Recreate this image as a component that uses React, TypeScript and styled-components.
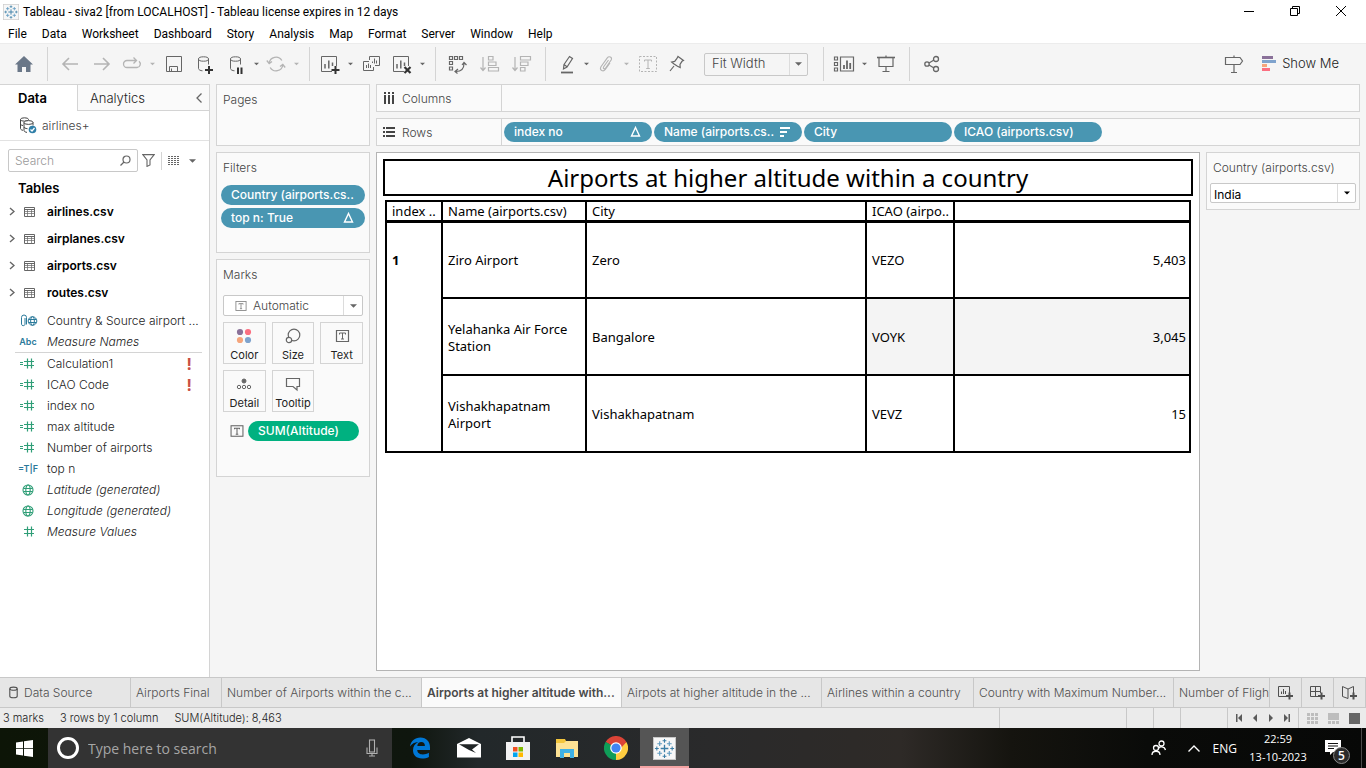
import React from "react";
import styled, { createGlobalStyle, css } from "styled-components";

const UI = `Inter, "Liberation Sans", sans-serif`;
const MENU = `Roboto, "Open Sans", sans-serif`;
const SYSTEM = `"Open Sans", "Noto Sans", sans-serif`;
const VIZ = `"Noto Sans", "Open Sans", sans-serif`;

const C = {
  line: "#d4d4d4",
  panel: "#fafafa",
  chrome: "#f5f5f5",
  ink: "#222222",
  soft: "#444444",
  icon: "#666666",
  off: "#b4b4b4",
  blue: "#4996b2",
  green: "#00b180",
  fieldGreen: "#2f9e77",
  fieldBlue: "#2b7a9b",
};

const Global = createGlobalStyle`
  *, *::before, *::after { box-sizing: border-box; }
  body { margin: 0; background: ${C.chrome}; font-family: ${UI}; font-size: 12px; font-weight: 300; color: ${C.ink}; }
  button, input, select { font: inherit; color: inherit; }
  button { background: none; border: 0; padding: 0; cursor: default; }
  h1, h2, h3, ul { margin: 0; padding: 0; font: inherit; }
  ul { list-style: none; }
  svg { display: block; flex: none; }
`;

const Window = styled.div`
  display: flex;
  flex-direction: column;
  min-height: 100vh;
`;

/* ---------- window chrome ---------- */

const TitleBar = styled.header`
  display: flex;
  align-items: center;
  height: 24px;
  padding: 0 2px 1px 3px;
  background: #fff;
  color: #000;
  font-family: ${MENU};
  font-size: 12px;
  font-weight: 400;
`;

const WindowTitle = styled.h1`
  flex: 1;
  margin-left: 4px;
`;

const WindowButton = styled.button`
  display: flex;
  align-items: center;
  justify-content: center;
  width: 46px;
  height: 20px;
  padding-bottom: 2px;
`;

const MenuBar = styled.nav`
  display: flex;
  align-items: center;
  height: 19px;
  padding-left: 8px;
  gap: 15px;
  background: #fff;
  color: #000;
  font-family: ${MENU};
  font-size: 12px;
  font-weight: 400;
`;

const ToolBar = styled.div`
  display: flex;
  align-items: center;
  height: 41px;
  padding: 0 27px 0 8px;
  border-top: 1px solid #ececec;
  background: ${C.chrome};
`;

const Tool = styled.button<{ $w?: number; $tone?: string }>`
  display: flex;
  flex: none;
  align-items: center;
  justify-content: center;
  width: ${(p) => p.$w ?? 32}px;
  height: 32px;
  color: ${(p) => p.$tone ?? C.icon};
`;

const Divider = styled.span`
  flex: none;
  align-self: stretch;
  width: 1px;
  margin: 3px 6px 3px 7px;
  background: ${C.line};
`;

const ShowMe = styled.button`
  display: flex;
  align-items: center;
  gap: 6px;
  margin-left: 12px;
  padding-bottom: 2px;
  font-size: 13px;
`;

const Spacer = styled.span`
  flex: 1;
`;

/* ---------- selects ---------- */

const Picker = styled.label<{ $h: number; $caret: number; $bg?: string }>`
  display: grid;
  align-items: center;
  height: ${(p) => p.$h}px;
  border: 1px solid #c8c8c8;
  border-radius: 2px;
  background: ${(p) => p.$bg ?? "#fff"};
  & > * { grid-area: 1 / 1; }
  & > svg { color: #8a8a8a; }
  select {
    width: 100%;
    height: 100%;
    border: 0;
    background: none;
    appearance: none;
    outline: 0;
  }
  & > span {
    display: flex;
    align-items: center;
    justify-content: center;
    justify-self: end;
    width: ${(p) => p.$caret}px;
    height: 100%;
    border-left: 1px solid #dcdcdc;
    color: ${C.icon};
    pointer-events: none;
  }
`;

const FitPicker = styled(Picker)`
  width: 104px;
  margin: 0 8px 0 12px;
  color: ${C.soft};
  font-size: 13px;
  select { padding: 0 0 2px 7px; }
`;

const MarkPicker = styled(Picker)`
  color: ${C.soft};
  select { padding: 0 0 0 29px; }
  & > svg { margin-left: 11px; }
`;

const CountryPicker = styled(Picker)`
  margin: 0 3px;
  color: #000;
  font-weight: 400;
  select { padding: 2px 0 0 3px; }
`;

/* ---------- data pane ---------- */

const Main = styled.main`
  display: flex;
  flex: 1;
`;

const DataPane = styled.aside`
  flex: none;
  width: 210px;
  border-top: 1px solid ${C.line};
  border-right: 1px solid ${C.line};
  background: #fff;
`;

const PaneTabs = styled.div`
  display: flex;
  height: 26px;
  font-size: 13px;
`;

const DataTab = styled.button`
  width: 77px;
  padding-right: 12px;
  font-weight: 600;
  color: #000;
`;

const AnalyticsTab = styled.button`
  flex: 1;
  padding-left: 12px;
  text-align: left;
  border-left: 1px solid ${C.line};
  border-bottom: 1px solid ${C.line};
  background: ${C.panel};
`;

const Collapse = styled.button`
  padding-right: 7px;
  border-bottom: 1px solid ${C.line};
  background: ${C.panel};
  color: ${C.icon};
`;

const Source = styled.div`
  display: flex;
  align-items: center;
  gap: 5px;
  height: 30px;
  padding-left: 20px;
  border-bottom: 1px solid #e2e2e2;
  color: ${C.soft};
`;

const SearchRow = styled.div`
  display: flex;
  align-items: center;
  height: 23px;
  margin: 8px 13px 0 8px;
  color: ${C.icon};
`;

const SearchBox = styled.label`
  display: flex;
  align-items: center;
  width: 130px;
  height: 23px;
  margin-right: 4px;
  padding: 0 6px;
  border: 1px solid #c8c8c8;
  border-radius: 2px;
  input {
    flex: 1;
    min-width: 0;
    padding: 0;
    border: 0;
    outline: 0;
    background: none;
  }
  input::placeholder { color: #999; opacity: 1; }
`;

const SearchSplit = styled.span`
  width: 1px;
  height: 18px;
  margin: 0 6px;
  background: ${C.line};
`;

const TablesHeading = styled.h2`
  margin: 6px 0 0 18px;
  line-height: 21px;
  font-size: 13px;
  font-weight: 600;
  color: #000;
`;

const TableRow = styled.li`
  display: flex;
  align-items: center;
  height: 27px;
  padding: 0 0 2px 9px;
  font-weight: 600;
  color: #000;
  svg { color: ${C.icon}; }
  svg:nth-of-type(2) { margin: 0 12px 0 9px; }
`;

const FieldList = styled.ul<{ $ruled?: boolean }>`
  margin: ${(p) => (p.$ruled ? "0 7px 0 15px" : "3px 7px 0 15px")};
  ${(p) => p.$ruled && css`
    border-top: 1px solid ${C.line};
  `}
`;

const Field = styled.li<{ $italic?: boolean; $tone: string }>`
  display: flex;
  align-items: center;
  height: 21px;
  white-space: nowrap;
  font-style: ${(p) => (p.$italic ? "italic" : "normal")};
  & > span:first-child {
    display: flex;
    justify-content: center;
    width: 26px;
    margin-right: 6px;
    color: ${(p) => p.$tone};
    font-size: 9px;
    font-weight: 600;
    font-style: normal;
  }
`;

const Warning = styled.strong`
  margin-left: auto;
  padding-right: 10px;
  color: #c94f43;
  font-size: 16px;
  font-weight: 700;
`;

/* ---------- shelves and cards ---------- */

const Cards = styled.div`
  display: flex;
  flex: none;
  flex-direction: column;
  gap: 6px;
  width: 154px;
  margin-left: 6px;
`;

const Card = styled.section<{ $h: number }>`
  min-height: ${(p) => p.$h}px;
  border: 1px solid ${C.line};
  background: ${C.panel};
  color: ${C.soft};
`;

const CardTitle = styled.h3`
  padding: 0 6px;
  line-height: 30px;
`;

const Pill = styled.button<{ $w: number; $green?: boolean }>`
  display: flex;
  flex: none;
  align-items: center;
  justify-content: space-between;
  width: ${(p) => p.$w}px;
  height: 20px;
  padding: 0 11px 1px 10px;
  border-radius: 10px;
  background: ${(p) => (p.$green ? C.green : C.blue)};
  color: #fff;
  font-weight: 500;
  white-space: nowrap;
`;

const FilterPills = styled.div`
  display: flex;
  flex-direction: column;
  gap: 3px;
  padding: 2px 4px;
`;

const MarksBody = styled.div`
  display: grid;
  gap: 6px;
  padding: 5px 6px;
`;

const MarkGrid = styled.div`
  display: grid;
  grid-template-columns: repeat(3, 1fr);
  gap: 6px;
`;

const MarkButton = styled.button`
  display: flex;
  flex-direction: column;
  align-items: center;
  justify-content: space-between;
  height: 42px;
  padding-top: 4px;
  border: 1px solid ${C.line};
  line-height: 15px;
  font-size: 11px;
  font-weight: 400;
  color: ${C.ink};
  svg { color: ${C.icon}; }
`;

const EncodedMark = styled.div`
  display: flex;
  align-items: center;
  gap: 4px;
  padding: 3px 0 0 7px;
  color: ${C.icon};
`;

const Work = styled.div`
  display: flex;
  flex: 1;
  flex-direction: column;
  gap: 6px;
  min-width: 0;
  margin: 0 6px;
  padding-bottom: 6px;
`;

const Shelf = styled.div`
  display: flex;
  align-items: center;
  height: 28px;
  border: 1px solid ${C.line};
  background: ${C.panel};
`;

const ShelfLabel = styled.div`
  display: flex;
  flex: none;
  align-items: center;
  gap: 7px;
  width: 125px;
  height: 100%;
  margin-right: 2px;
  padding-left: 6px;
  border-right: 1px solid ${C.line};
  color: ${C.soft};
`;

const ShelfPills = styled.div`
  display: flex;
  gap: 2px;
`;

const ViewRow = styled.div`
  display: flex;
  flex: 1;
  gap: 6px;
`;

const Viz = styled.section`
  flex: 1;
  min-width: 0;
  padding: 6px;
  border: 1px solid #b4b4b4;
  background: #fff;
  color: #000;
  font-family: ${VIZ};
  font-size: 13px;
  font-weight: 400;
`;

const VizTitle = styled.h2`
  height: 37px;
  border: 2px solid #000;
  line-height: 34px;
  font-size: 24px;
  text-align: center;
`;

const VizTable = styled.table`
  width: calc(100% - 4px);
  margin: 4px 2px 0;
  table-layout: fixed;
  border-collapse: collapse;
  line-height: 17px;
`;

const Head = styled.th`
  height: 20px;
  padding: 1px 4px 0 5px;
  border: 2px solid #000;
  border-bottom-width: 3px;
  font-weight: 400;
  line-height: 16px;
  text-align: left;
  white-space: nowrap;
`;

const Cell = styled.td<{ $num?: boolean; $shade?: boolean }>`
  height: 77px;
  padding: 2px 3px 0 5px;
  border: 2px solid #000;
  background: ${(p) => (p.$shade ? "#f4f4f4" : "#fff")};
  text-align: ${(p) => (p.$num ? "right" : "left")};
`;

const IndexCell = styled.th`
  padding: 29px 5px 0;
  border: 2px solid #000;
  text-align: left;
  vertical-align: top;
`;

const FilterCard = styled(Card)`
  flex: none;
  align-self: flex-start;
  width: 154px;
  padding-bottom: 4px;
`;

/* ---------- sheet tabs and status ---------- */

const SheetTabs = styled.nav`
  display: flex;
  height: 31px;
  border-top: 1px solid #c8c8c8;
  border-bottom: 1px solid #c8c8c8;
  background: #e6e6e6;
  color: #505050;
`;

const SheetTab = styled.button<{ $w: number; $active?: boolean; $pad?: number }>`
  display: flex;
  flex: 0 0 ${(p) => p.$w}px;
  align-items: center;
  gap: 5px;
  padding-left: ${(p) => p.$pad ?? 5}px;
  overflow: hidden;
  border-right: 1px solid #c8c8c8;
  white-space: nowrap;
  ${(p) => p.$active && css`
    background: ${C.panel};
    color: #4a4a4a;
    font-weight: 600;
  `}
`;

const LastSheetTab = styled(SheetTab)`
  flex: 1 1 0;
`;

const NewSheet = styled.button`
  display: flex;
  flex: none;
  align-items: center;
  justify-content: center;
  width: 32px;
  border-right: 1px solid #c8c8c8;
`;

const StatusBar = styled.footer`
  display: flex;
  align-items: center;
  height: 20px;
  padding-left: 3px;
  background: #ebebeb;
  font-size: 11px;
`;

const StatusText = styled.span`
  margin-right: 16px;
`;

const StatusCell = styled.div<{ $w: number; $gap?: number; $pad?: number }>`
  display: flex;
  flex: none;
  align-items: center;
  gap: ${(p) => p.$gap ?? 0}px;
  width: ${(p) => p.$w}px;
  height: 100%;
  padding-left: ${(p) => p.$pad ?? 0}px;
  border-left: 1px solid #c8c8c8;
  color: #5a5a5a;
`;

/* ---------- operating system task bar ---------- */

const TaskBar = styled.footer`
  display: flex;
  align-items: center;
  height: 40px;
  background: linear-gradient(90deg, #0d1507 0, #0f160e 30%, #22282a 35%, #2a2a2b 52%, #2e2a27 66%, #15140f 74%, #0a0b09 84%, #070807 100%);
  color: #fff;
  font-family: ${SYSTEM};
  font-weight: 400;
`;

const Start = styled.button`
  display: flex;
  align-items: center;
  justify-content: center;
  width: 48px;
  height: 40px;
`;

const TaskSearch = styled.label`
  display: flex;
  align-items: center;
  width: 344px;
  height: 40px;
  padding: 0 14px 0 8px;
  background: #333;
  font-size: 14px;
  input {
    flex: 1;
    min-width: 0;
    margin-left: 8px;
    padding: 0;
    border: 0;
    outline: 0;
    background: none;
  }
  input::placeholder { color: #a6a6a6; opacity: 1; }
  svg:last-child { color: #b0b0b0; }
`;

const Apps = styled.div`
  display: flex;
  flex: 1;
  margin-left: 3px;
`;

const AppButton = styled.button<{ $active?: boolean }>`
  display: flex;
  align-items: center;
  justify-content: center;
  width: 49px;
  height: 40px;
  ${(p) => p.$active && css`
    background: #555;
    box-shadow: inset 0 -2px #f4a3a3;
  `}
`;

const Tray = styled.div`
  display: flex;
  align-items: center;
  height: 40px;
  padding-right: 4px;
  font-size: 12px;
`;

const Clock = styled.time`
  width: 58px;
  margin: 0 18px 0 12px;
  line-height: 18px;
  font-size: 11px;
  text-align: center;
  white-space: nowrap;
`;

const Notices = styled.button`
  position: relative;
  width: 26px;
  height: 26px;
`;

const Badge = styled.span`
  position: absolute;
  right: 1px;
  bottom: -3px;
  width: 17px;
  height: 17px;
  border: 1px solid #8a8a8a;
  border-radius: 9px;
  background: #2b2b2b;
  line-height: 15px;
  font-size: 12px;
  font-weight: 600;
  text-align: center;
`;

const ShowDesktop = styled.span`
  width: 1px;
  height: 40px;
  margin-left: 10px;
  background: #4a4a4a;
`;

/* ---------- icons ---------- */

type SvgProps = { w?: number; h?: number; sw?: number; fill?: string; children: React.ReactNode };

const Svg = ({ w = 20, h = 20, sw = 1, fill = "none", children }: SvgProps) => (
  <svg width={w} height={h} viewBox={`0 0 ${w} ${h}`} fill={fill} stroke={fill === "none" ? "currentColor" : "none"} strokeWidth={sw} aria-hidden="true">
    {children}
  </svg>
);

const CaretIcon = ({ color = "currentColor", w = 7 }: { color?: string; w?: number }) => (
  <svg width={w} height="4" viewBox="0 0 8 4" fill={color} aria-hidden="true">
    <path d="M0 0h8L4 4z" />
  </svg>
);

const Crosses = ({ size, color = "#3b7ea6" }: { size: number; color?: string }) => (
  <svg width={size} height={size} viewBox="0 0 24 24" fill="none" stroke={color} aria-hidden="true">
    <rect x=".5" y=".5" width="23" height="23" fill="#f7f7f7" stroke="#c9c9c9" />
    <path strokeWidth="1.4" d="M12 8v8M8 12h8" />
    <path strokeWidth="1.1" d="M12 2v4M10 4h4M12 18v4M10 20h4M4 10v4M2 12h4M20 10v4M18 12h4" />
    <path strokeWidth="1.2" stroke="#5f9bc0" d="M7 4.500v5M4.500 7h5M17 4.500v5M14.500 7h5M7 14.500v5M4.500 17h5M17 14.500v5M14.500 17h5" />
  </svg>
);

const HomeIcon = () => (
  <svg width="18" height="16" viewBox="0 0 18 16" fill="#6a7788" aria-hidden="true">
    <path d="M9 0l9 8.500h-2.500V16H11v-5H7v5H2.500V8.500H0z" />
  </svg>
);
const BackIcon = () => <Svg sw={1.6}><path d="M18 10H3M9 4l-6 6 6 6" /></Svg>;
const ForwardIcon = () => <Svg sw={1.6}><path d="M2 10h15M11 4l6 6-6 6" /></Svg>;
const RedoIcon = () => <Svg sw={1.3}><path d="M5 6.500h9M5 6.500a3.500 3.500 0 0 0 0 7h10a3.500 3.500 0 0 0 2-6.200M11.500 3.500l3 3-3 3" /></Svg>;
const SaveIcon = () => <Svg><path d="M2.500 2.500h15v15h-15zM5.500 17v-4.500h8V17M7.500 14.500V17" /></Svg>;
const DbShape = ({ x }: { x: number }) => (
  <g transform={`translate(${x} 0)`}>
    <ellipse cx="5" cy="5" rx="5" ry="2.200" />
    <path d="M0 5v9.500c0 1.300 2 2.200 4 2.300M10 5v5.500" />
  </g>
);
const DbAddIcon = () => <Svg><DbShape x={2.5} /><path stroke="#333" strokeWidth="2" d="M13 12v8M9 16h8" /></Svg>;
const DbPauseIcon = () => <Svg><DbShape x={4.5} /><path stroke="#333" strokeWidth="2" d="M12 13.500v6.500M15.500 13.500v6.500" /></Svg>;
const RefreshIcon = () => <Svg sw={1.3}><path d="M3.200 9a6.800 6.800 0 0 1 12.600-2.500M16.800 11A6.800 6.800 0 0 1 4.200 13.500M.8 6.500L3.200 9.500 6 7.500M19.200 13.500l-2.400-3-2.800 2" /></Svg>;
const ChartBox = () => (
  <>
    <path d="M12 17.500H1.500v-15h15V12" />
    <path strokeWidth="1.500" d="M5 14.500V10M8.800 14.500V6.500M12.500 12V8.500" />
  </>
);
const SheetAddIcon = () => <Svg><ChartBox /><path stroke="#333" strokeWidth="2" d="M15.500 12v8M11.500 16h8" /></Svg>;
const SheetClearIcon = () => <Svg><ChartBox /><path stroke="#333" strokeWidth="2.200" d="M12.500 13l6 6M18.500 13l-6 6" /></Svg>;
const DuplicateIcon = () => <Svg><path d="M7.500 6V2.500h10v9H13M7 7.500H1.500v9h10V13M10.500 9V7.500M12.500 9.500v-5M14.500 9.500V6.500M4.500 14v-3M6.500 14V9.500M8.500 14v-3" /></Svg>;
const SwapIcon = () => <Svg sw={1.2}><path d="M1.500 2.500h3v3h-3zM6.500 2.500h3v3h-3zM11.500 2.500h3v3h-3zM1.500 7.500h3v3h-3zM1.500 13h3v3h-3zM8 17.500c5 0 8-3 8-8M14 11l2-2.500 2.500 2.500M10 15l-3 2.500 2.500 2" /></Svg>;
const SortAscIcon = () => <Svg sw={1.2}><path d="M3 3v13M.5 13.500L3 16.500l2.500-3M8.500 2.500H13v3.500H8.500zM8.500 8H16v3.500H8.500zM8.500 13.500h10V17h-10z" /></Svg>;
const SortDescIcon = () => <Svg sw={1.2}><path d="M3 3v13M.5 13.500L3 16.500l2.500-3M8.500 2.500h10V6h-10zM8.500 8H16v3.500H8.500zM8.500 13.500H13V17H8.500z" /></Svg>;
const PenIcon = () => <Svg w={22} sw={1.2}><path d="M9 10.500l5.500-8 3 2-5.500 8.500-3.500 2zM9 10.500l3 2.200" /><path strokeWidth="1.800" d="M6 18.500h12" /></Svg>;
const ClipIcon = () => <Svg sw={1.1}><path d="M12.500 6l-5 7c-.8 1.500 1 2.500 2 1.200l5.800-8.500c1-2.500-2.300-4-4-1.800L4.800 13c-1.500 3.500 2.500 5.200 4.500 2.500L14 9" /></Svg>;
const TextBoxIcon = ({ dashed, size = 20 }: { dashed?: boolean; size?: number }) => (
  <svg width={size} height={size} viewBox="0 0 20 20" fill="none" stroke="currentColor" strokeWidth={dashed ? 1 : 1.5} strokeDasharray={dashed ? "2 1.500" : undefined} aria-hidden="true">
    <rect x="1.500" y="2.500" width="17" height="15" />
    <path strokeDasharray="none" d="M6.500 7.500V6h7v1.500M10 6v8.500M8.200 14.500h3.600" />
  </svg>
);
const PinIcon = () => <Svg sw={1.2}><path d="M10 2.500l5.500 4-1.500.8-2 3 .2 3.200-2.700-1.200-3.800-2.600-2-1.700 3-.6L8.800 4.700zM6 12l-4 5" /></Svg>;
const CardsIcon = () => <Svg w={24} sw={1.2}><path d="M2.500 3h3v3h-3zM2.500 8.500h3v3h-3zM2.500 14h3v3h-3zM8.500 3h13v14h-13z" /><path strokeWidth="1.800" d="M12 15v-4M15 15V6.500M18.200 15V9" /></Svg>;
const PresentIcon = () => <Svg sw={1.2}><path strokeWidth="1.600" d="M1 3.500h18" /><path d="M3 4v8.500h14V4M10 1.500V3M10 12.500v5M6.500 17.500h7" /></Svg>;
const ShareIcon = () => <Svg sw={1.3}><circle cx="5" cy="10" r="2.200" /><circle cx="14" cy="5" r="2.500" /><circle cx="14" cy="15" r="2.500" /><path d="M7 9l5-3M7 11l5 3" /></Svg>;
const SignIcon = () => <Svg sw={1.2}><path d="M1.500 3.500H16l2.500 3.500-2.500 3.500H1.500zM10 1.500v2M10 10.500v8M7 18.500h6" /></Svg>;
const ShowMeIcon = () => (
  <svg width="14" height="15" viewBox="0 0 14 15" aria-hidden="true">
    <path fill="#8a7199" d="M0 0h11v3H0z" />
    <path fill="#7fa3cd" d="M0 4h14v3H0z" />
    <path fill="#f5a57c" d="M0 8h5v3H0z" />
    <path fill="#fb6f81" d="M0 12h8v3H0z" />
  </svg>
);

const SourceIcon = () => (
  <Svg w={17} h={17}>
    <ellipse cx="4.500" cy="2.500" rx="4" ry="1.700" />
    <path d="M.5 2.500v9c0 1 1 1.500 2.500 1.800M.5 7c0 .8 1 1.300 2.500 1.500" />
    <ellipse cx="8.500" cy="5.500" rx="4.500" ry="1.900" fill="#fff" />
    <path d="M4 5.500v8c0 1 1.500 1.700 3 1.900M13 5.500v3M4 10c0 .8 1.500 1.500 3.500 1.700" />
    <circle cx="12.500" cy="12.500" r="3.800" fill="#2f7fa8" stroke="none" />
    <path stroke="#fff" strokeWidth="1.300" d="M10.500 12.500l1.500 1.500 2.500-3" />
  </Svg>
);
const SearchIcon = () => <Svg w={11} h={11} sw={1.2}><circle cx="6.500" cy="4.500" r="3.500" /><path d="M4 7L.5 10.500" /></Svg>;
const FunnelIcon = () => <Svg w={13} h={13} sw={1.1}><path d="M.8.6h11.400L8 6v5L5 12.400V6z" /></Svg>;
const ListIcon = () => <Svg w={12} h={10}><path strokeDasharray="2 1 2 1 2 1 2 1" d="M0 .5h12M0 2.500h12M0 4.500h12M0 6.500h12M0 8.500h12" /></Svg>;
const ChevronIcon = () => <Svg w={6} h={9} sw={1.4}><path d="M1 1l4 3.500L1 8" /></Svg>;
const GridIcon = () => <Svg w={11} h={10}><path d="M.5 .5h10v9H.5zM.5 2.500h10" /><path strokeOpacity=".7" d="M.5 4.500h10M.5 6.500h10M3.500 2.500v7M7.500 2.500v7" /></Svg>;
const HashIcon = ({ calc }: { calc?: boolean }) => (
  <Svg w={18} h={11} sw={1.2}>
    <path d={`M8.500 .5v10M12.500 .5v10M5 3.500h10M5 7.500h10${calc ? "M1 4.500h3M1 6.500h3" : ""}`} />
  </Svg>
);
const GlobeIcon = () => (
  <Svg w={12} h={12} sw={1.1}>
    <circle cx="6" cy="6" r="5" />
    <ellipse cx="6" cy="6" rx="2.200" ry="5" />
    <path d="M1.500 4.500h9M1.500 7.500h9" />
  </Svg>
);
const GroupGlobeIcon = () => (
  <Svg w={20} h={13}>
    <path d="M8.500 10.500v-7a2.500 2.500 0 0 0-5 0v6.800a1.800 1.800 0 0 0 3.500 0V4" />
    <circle cx="14.500" cy="7" r="4.300" />
    <ellipse cx="14.500" cy="7" rx="1.900" ry="4.300" />
    <path d="M10.500 5.500h8M10.500 8.500h8" />
  </Svg>
);
const DeltaIcon = () => <Svg w={11} h={11} sw={1.4}><path d="M5.500 1.500L9.500 10h-8z" /></Svg>;
const SortIcon = () => <Svg w={11} h={11} sw={2}><path d="M0 2h10M0 6h7M0 10h4" /></Svg>;
const ColumnsIcon = () => <Svg w={12} h={12} sw={2}><path strokeDasharray="2 1 10" d="M2 0v12M6 0v12M10 0v12" /></Svg>;
const RowsIcon = () => <Svg w={12} h={10} sw={2}><path strokeDasharray="2 1 10" d="M0 1h12M0 5h12M0 9h12" /></Svg>;

const ColorIcon = () => (
  <svg width="16" height="18" viewBox="0 0 16 18" aria-hidden="true">
    <circle cx="4" cy="5" r="3.100" fill="#8a7199" /><circle cx="12" cy="5" r="3.100" fill="#fb6f81" />
    <circle cx="4" cy="13" r="3.100" fill="#f5a57c" /><circle cx="12" cy="13" r="3.100" fill="#7fa3cd" />
  </svg>
);
const SizeIcon = () => <Svg w={16} h={18} sw={1.2}><circle cx="9" cy="8" r="5.800" /><circle cx="4" cy="13" r="2.700" fill="#fafafa" /></Svg>;
const DetailIcon = () => <Svg w={16} h={18}><circle cx="8" cy="6" r="2" fill="currentColor" /><circle cx="3" cy="12" r="1.700" /><circle cx="8" cy="12" r="1.700" /><circle cx="13" cy="12" r="1.700" /></Svg>;
const TooltipIcon = () => <Svg w={16} h={18} sw={1.2}><path d="M1.500 3.500h13v8h-2.500v3.500l-4-3.500H1.500z" /></Svg>;
const TextMarkIcon = () => <Svg w={16} h={18}><path strokeWidth="1.200" d="M2.500 3.500h12v11h-12z" /><path d="M5.500 7.500V6h6v1.500M8.500 6v6M7 12h3" /></Svg>;

const DataSourceIcon = () => <Svg w={10} h={14} sw={1.1}><ellipse cx="4.500" cy="2.700" rx="3.700" ry="1.600" /><path d="M.8 2.700v7.500c0 .9 1.600 1.500 3.700 1.500s3.700-.6 3.700-1.500V2.700" /></Svg>;
const NewSheetIcon = () => <Svg w={16} h={15}><path d="M9 11.500H.5v-10h11V8M3.500 9V6.500M5.500 9V4M7.500 9V6" /><path strokeWidth="2" d="M11.500 7.500v7M8 11h7" /></Svg>;
const NewDashIcon = () => <Svg w={16} h={15}><path d="M8 11.500H.5v-10h10V8M5.500 1.500v10M.5 6.500h10" /><path strokeWidth="2" d="M11.500 7.500v7M8 11h7" /></Svg>;
const NewStoryIcon = () => <Svg w={16} h={15}><path d="M6 4L.5 1.500v10L6 13.500zM6 4l5.500-2.500V8" /><path strokeWidth="2" d="M11.500 7.500v7M8 11h7" /></Svg>;

const WindowsIcon = () => <Svg w={17} h={17} fill="#fff"><path d="M0 2.500l7-1v6.700H0zM8 1.300L17 0v8.200H8zM0 9h7v6.600l-7-1zM8 9h9v8l-9-1.300z" /></Svg>;
const MicIcon = () => <Svg w={12} h={18} sw={1.1}><rect x="3.500" y="1" width="5" height="12" /><path d="M1 8.500V14.500h10V8.500M6 14.500V17M3 17h6" /></Svg>;
const EdgeIcon = () => (
  <svg width="22" height="22" viewBox="0 0 22 22" fill="#0078d7" aria-hidden="true">
    <path d="M1 9.600C1.800 4 5.800.5 11.400.5 17.600.5 21 5 21 10.300V13H8.200c.2 3 2.600 4.400 5.600 4.400 2.200 0 4.300-.6 6.100-1.700v4.200c-1.900 1.100-4.400 1.600-6.900 1.600C7.500 21.500 4 18.300 4 13.300c0-3.600 2-6.700 5.200-8.200C5.600 5.300 2.800 7 1 9.600zM8.300 9h7.600c0-2.500-1.200-4-3.600-4-2.300 0-3.700 1.600-4 4z" />
  </svg>
);
const MailIcon = () => (
  <svg width="24" height="20" viewBox="0 0 24 20" aria-hidden="true">
    <path fill="#fff" d="M0 6L12 0l12 6v13.500H0z" />
    <path fill="#202526" d="M2 6.200h20L15 11.500l4 3.500L12 12z" />
  </svg>
);
const StoreIcon = () => (
  <svg width="24" height="24" viewBox="0 0 24 24" aria-hidden="true">
    <path fill="none" stroke="#fff" strokeWidth="1.600" d="M6 7V1h12v6" />
    <path fill="#f2f2f2" d="M0 6h24v18H0z" />
    <path fill="#f25022" d="M7 11h4.500v4.500H7z" /><path fill="#7fba00" d="M12.500 11H17v4.500h-4.500z" />
    <path fill="#00a4ef" d="M7 16.500h4.500V21H7z" /><path fill="#ffb900" d="M12.500 16.500H17V21h-4.500z" />
  </svg>
);
const FolderIcon = () => (
  <svg width="22" height="19" viewBox="0 0 22 19" aria-hidden="true">
    <path fill="#f3c53c" d="M0 0h9l1 2h12v4H0z" />
    <path fill="#fde294" d="M0 4h8l2-2h12v16H0z" />
    <path fill="#3fb1e5" d="M4 10h14v9h-4v-5H8v5H4z" />
  </svg>
);
const ChromeIcon = () => (
  <svg width="24" height="24" viewBox="0 0 24 24" aria-hidden="true">
    <path fill="#db4437" d="M12 12L1.600 6A12 12 0 0 1 22.400 6z" />
    <path fill="#0f9d58" d="M12 12v12A12 12 0 0 1 1.600 6z" />
    <path fill="#ffcd40" d="M12 12L22.400 6A12 12 0 0 1 12 24z" />
    <path fill="#db4437" d="M12 6h10.400L17 12z" /><path fill="#0f9d58" d="M1.600 6l5.200 9L12 12z" /><path fill="#ffcd40" d="M12 24l5.200-9L12 12z" />
    <circle cx="12" cy="12" r="5.800" fill="#fff" /><circle cx="12" cy="12" r="4.600" fill="#4285f4" />
  </svg>
);
const PeopleIcon = () => <Svg w={16} h={16} sw={1.3}><circle cx="10.500" cy="3.500" r="2.500" /><path d="M7.500 8.500c1-2.500 6-2.500 7 1.500" /><circle cx="5" cy="8" r="2.500" /><path d="M1 15c0-5 8-5 8 0" /></Svg>;

/* ---------- content ---------- */

const tables = ["airlines.csv", "airplanes.csv", "airports.csv", "routes.csv"];

const calcFields = [
  { name: "Calculation1", broken: true },
  { name: "ICAO Code", broken: true },
  { name: "index no" },
  { name: "max altitude" },
  { name: "Number of airports" },
];

const airports = [
  { name: "Ziro Airport", city: "Zero", icao: "VEZO", altitude: "5,403" },
  { name: "Yelahanka Air Force Station", city: "Bangalore", icao: "VOYK", altitude: "3,045" },
  { name: "Vishakhapatnam Airport", city: "Vishakhapatnam", icao: "VEVZ", altitude: "15" },
];

const sheets = [
  { name: "Airports Final", w: 91 },
  { name: "Number of Airports within the c...", w: 200 },
  { name: "Airports at higher altitude with...", w: 200, active: true },
  { name: "Airpots at higher altitude in the ...", w: 200 },
  { name: "Airlines within a country", w: 152 },
  { name: "Country with Maximum Number...", w: 200 },
];

const menus = ["File", "Data", "Worksheet", "Dashboard", "Story", "Analysis", "Map", "Format", "Server", "Window", "Help"];

const CaretTool = ({ off, label }: { off?: boolean; label: string }) => (
  <Tool $w={12} $tone={off ? C.off : undefined} aria-label={label}><CaretIcon w={5} /></Tool>
);

const AppToolBar = () => (
  <ToolBar role="toolbar">
    <Tool aria-label="Start page"><HomeIcon /></Tool>
    <Divider />
    <Tool $tone={C.off} aria-label="Undo"><BackIcon /></Tool>
    <Tool $tone={C.off} aria-label="Redo"><ForwardIcon /></Tool>
    <Tool $w={28} $tone={C.off} aria-label="Replay"><RedoIcon /></Tool>
    <CaretTool off label="Replay options" />
    <Tool aria-label="Save"><SaveIcon /></Tool>
    <Tool aria-label="New data source"><DbAddIcon /></Tool>
    <Tool $w={28} aria-label="Pause updates"><DbPauseIcon /></Tool>
    <CaretTool label="Pause options" />
    <Tool $w={28} $tone={C.off} aria-label="Run update"><RefreshIcon /></Tool>
    <CaretTool off label="Update options" />
    <Divider />
    <Tool $w={28} aria-label="New worksheet"><SheetAddIcon /></Tool>
    <CaretTool label="New sheet options" />
    <Tool aria-label="Duplicate"><DuplicateIcon /></Tool>
    <Tool $w={28} aria-label="Clear sheet"><SheetClearIcon /></Tool>
    <CaretTool label="Clear options" />
    <Divider />
    <Tool aria-label="Swap rows and columns"><SwapIcon /></Tool>
    <Tool $tone={C.off} aria-label="Sort ascending"><SortAscIcon /></Tool>
    <Tool $tone={C.off} aria-label="Sort descending"><SortDescIcon /></Tool>
    <Divider />
    <Tool $w={28} aria-label="Highlight"><PenIcon /></Tool>
    <CaretTool label="Highlight options" />
    <Tool $w={28} $tone={C.off} aria-label="Group members"><ClipIcon /></Tool>
    <CaretTool off label="Group options" />
    <Tool $tone={C.off} aria-label="Show mark labels"><TextBoxIcon dashed /></Tool>
    <Tool $w={28} aria-label="Fix axes"><PinIcon /></Tool>
    <FitPicker $h={23} $caret={18} $bg={C.chrome}>
      <select aria-label="Fit"><option>Fit Width</option></select>
      <span><CaretIcon /></span>
    </FitPicker>
    <Divider />
    <Tool $w={28} aria-label="Show or hide cards"><CardsIcon /></Tool>
    <CaretTool label="Card options" />
    <Tool aria-label="Presentation mode"><PresentIcon /></Tool>
    <Divider />
    <Tool aria-label="Share"><ShareIcon /></Tool>
    <Spacer />
    <Tool aria-label="Guide"><SignIcon /></Tool>
    <ShowMe><ShowMeIcon />Show Me</ShowMe>
  </ToolBar>
);

const DataSide = () => (
  <DataPane>
    <PaneTabs>
      <DataTab>Data</DataTab>
      <AnalyticsTab>Analytics</AnalyticsTab>
      <Collapse aria-label="Collapse pane"><Svg w={6} h={10} sw={1.3}><path d="M5.500 .5L1 5l4.500 4.500" /></Svg></Collapse>
    </PaneTabs>
    <Source><SourceIcon />airlines+</Source>
    <SearchRow>
      <SearchBox><input type="text" placeholder="Search" aria-label="Search fields" /><SearchIcon /></SearchBox>
      <button aria-label="Filter fields"><FunnelIcon /></button>
      <SearchSplit />
      <button aria-label="View as list"><ListIcon /></button>
      <Spacer />
      <button aria-label="Pane menu"><CaretIcon /></button>
    </SearchRow>
    <TablesHeading>Tables</TablesHeading>
    <ul>
      {tables.map((t) => (
        <TableRow key={t}><ChevronIcon /><GridIcon />{t}</TableRow>
      ))}
    </ul>
    <FieldList>
      <Field $tone={C.fieldBlue}><span><GroupGlobeIcon /></span>Country &amp; Source airport ...</Field>
      <Field $tone={C.fieldBlue} $italic><span>Abc</span>Measure Names</Field>
    </FieldList>
    <FieldList $ruled>
      {calcFields.map((f) => (
        <Field key={f.name} $tone={C.fieldGreen}>
          <span><HashIcon calc /></span>{f.name}
          {f.broken && <Warning>!</Warning>}
        </Field>
      ))}
      <Field $tone={C.fieldBlue}><span>=T|F</span>top n</Field>
      <Field $tone={C.fieldGreen} $italic><span><GlobeIcon /></span>Latitude (generated)</Field>
      <Field $tone={C.fieldGreen} $italic><span><GlobeIcon /></span>Longitude (generated)</Field>
      <Field $tone={C.fieldGreen} $italic><span><HashIcon /></span>Measure Values</Field>
    </FieldList>
  </DataPane>
);

const CardColumn = () => (
  <Cards>
    <Card $h={62}><CardTitle>Pages</CardTitle></Card>
    <Card $h={101}>
      <CardTitle>Filters</CardTitle>
      <FilterPills>
        <Pill $w={144}>Country (airports.cs..</Pill>
        <Pill $w={144}>top n: True<DeltaIcon /></Pill>
      </FilterPills>
    </Card>
    <Card $h={218}>
      <CardTitle>Marks</CardTitle>
      <MarksBody>
        <MarkPicker $h={21} $caret={19}>
          <TextBoxIcon size={12} />
          <select aria-label="Mark type"><option>Automatic</option></select>
          <span><CaretIcon /></span>
        </MarkPicker>
        <MarkGrid>
          <MarkButton><ColorIcon />Color</MarkButton>
          <MarkButton><SizeIcon />Size</MarkButton>
          <MarkButton><TextMarkIcon />Text</MarkButton>
          <MarkButton><DetailIcon />Detail</MarkButton>
          <MarkButton><TooltipIcon />Tooltip</MarkButton>
        </MarkGrid>
        <EncodedMark><TextBoxIcon size={14} /><Pill $w={111} $green>SUM(Altitude)</Pill></EncodedMark>
      </MarksBody>
    </Card>
  </Cards>
);

const WorkArea = () => (
  <Work>
    <Shelf><ShelfLabel><ColumnsIcon />Columns</ShelfLabel></Shelf>
    <Shelf>
      <ShelfLabel><RowsIcon />Rows</ShelfLabel>
      <ShelfPills>
        <Pill $w={148}>index no<DeltaIcon /></Pill>
        <Pill $w={148}>Name (airports.cs..<SortIcon /></Pill>
        <Pill $w={148}>City</Pill>
        <Pill $w={148}>ICAO (airports.csv)</Pill>
      </ShelfPills>
    </Shelf>
    <ViewRow>
      <Viz>
        <VizTitle>Airports at higher altitude within a country</VizTitle>
        <VizTable>
          <colgroup>
            <col width="56" /><col width="144" /><col width="280" /><col width="88" /><col />
          </colgroup>
          <thead>
            <tr>
              <Head>index ..</Head><Head>Name (airports.csv)</Head><Head>City</Head><Head>ICAO (airpo..</Head><Head />
            </tr>
          </thead>
          <tbody>
            {airports.map((a, i) => (
              <tr key={a.icao}>
                {i === 0 && <IndexCell rowSpan={3}>1</IndexCell>}
                <Cell>{a.name}</Cell>
                <Cell>{a.city}</Cell>
                <Cell $shade={i === 1}>{a.icao}</Cell>
                <Cell $num $shade={i === 1}>{a.altitude}</Cell>
              </tr>
            ))}
          </tbody>
        </VizTable>
      </Viz>
      <FilterCard $h={58}>
        <CardTitle>Country (airports.csv)</CardTitle>
        <CountryPicker $h={20} $caret={18}>
          <select aria-label="Country (airports.csv)"><option>India</option></select>
          <span><CaretIcon color="#000" w={6} /></span>
        </CountryPicker>
      </FilterCard>
    </ViewRow>
  </Work>
);

const BottomBars = () => (
  <>
    <SheetTabs>
      <SheetTab $w={131} $pad={9}><DataSourceIcon />Data Source</SheetTab>
      {sheets.map((s) => (
        <SheetTab key={s.name} $w={s.w} $active={s.active}>{s.name}</SheetTab>
      ))}
      <LastSheetTab $w={96}>Number of Flight</LastSheetTab>
      <NewSheet aria-label="New worksheet"><NewSheetIcon /></NewSheet>
      <NewSheet aria-label="New dashboard"><NewDashIcon /></NewSheet>
      <NewSheet aria-label="New story"><NewStoryIcon /></NewSheet>
    </SheetTabs>
    <StatusBar>
      <StatusText>3 marks</StatusText>
      <StatusText>3 rows by 1 column</StatusText>
      <StatusText>SUM(Altitude): 8,463</StatusText>
      <Spacer />
      <StatusCell $w={127} /><StatusCell $w={27} /><StatusCell $w={27} /><StatusCell $w={47} />
      <StatusCell $w={71} $pad={7} $gap={8}>
        <button aria-label="First sheet"><Svg w={8} h={8} fill="#5a5a5a"><path d="M1 0h1.500v8H1zM7 0v8L3 4z" /></Svg></button>
        <button aria-label="Previous sheet"><Svg w={8} h={8} fill="#5a5a5a"><path d="M6 0v8L2 4z" /></Svg></button>
        <button aria-label="Next sheet"><Svg w={8} h={8} fill="#5a5a5a"><path d="M2 0v8l4-4z" /></Svg></button>
        <button aria-label="Last sheet"><Svg w={8} h={8} fill="#5a5a5a"><path d="M5.500 0H7v8H5.500zM1 0v8l4-4z" /></Svg></button>
      </StatusCell>
      <StatusCell $w={68} $pad={8} $gap={10}>
        <button aria-label="Show sheet sorter"><Svg w={11} h={11} fill="#bdbdbd"><path d="M0 0h3v3H0zM4 0h3v3H4zM8 0h3v3H8zM0 4h3v3H0zM4 4h3v3H4zM8 4h3v3H8zM0 8h3v3H0zM4 8h3v3H4zM8 8h3v3H8z" /></Svg></button>
        <button aria-label="Show filmstrip"><Svg w={11} h={11} fill="#bdbdbd"><path d="M0 0h11v7H0zM0 8h3v3H0zM4 8h3v3H4zM8 8h3v3H8z" /></Svg></button>
        <button aria-label="Show tabs"><Svg w={11} h={11} fill="#666"><path d="M0 0h11v11H0z" /></Svg></button>
      </StatusCell>
    </StatusBar>
    <TaskBar>
      <Start aria-label="Start"><WindowsIcon /></Start>
      <TaskSearch>
        <Svg w={24} h={24} sw={3}><circle cx="12" cy="12" r="9.500" /></Svg>
        <input type="text" placeholder="Type here to search" aria-label="Type here to search" />
        <MicIcon />
      </TaskSearch>
      <Apps>
        <AppButton aria-label="Edge"><EdgeIcon /></AppButton>
        <AppButton aria-label="Mail"><MailIcon /></AppButton>
        <AppButton aria-label="Store"><StoreIcon /></AppButton>
        <AppButton aria-label="File Explorer"><FolderIcon /></AppButton>
        <AppButton aria-label="Chrome"><ChromeIcon /></AppButton>
        <AppButton $active aria-label="Tableau"><Crosses size={23} /></AppButton>
      </Apps>
      <Tray>
        <Tool $tone="#fff" aria-label="People"><PeopleIcon /></Tool>
        <Tool $w={38} $tone="#fff" aria-label="Show hidden icons"><Svg w={12} h={7} sw={1.4}><path d="M.5 6.500L6 1l5.500 5.500" /></Svg></Tool>
        <span>ENG</span>
        <Clock>22:59<br />13-10-2023</Clock>
        <Notices aria-label="Notifications">
          <Svg w={17} h={17} fill="#fff"><path d="M0 0h16v12H8l-3 3v-3H0z" /><path stroke="#111" d="M3 3.500h10M3 6h10M3 8.500h6" /></Svg>
          <Badge>5</Badge>
        </Notices>
        <ShowDesktop />
      </Tray>
    </TaskBar>
  </>
);

export default function App() {
  return (
    <Window>
      <Global />
      <TitleBar>
        <Crosses size={16} />
        <WindowTitle>Tableau - siva2 [from LOCALHOST] - Tableau license expires in 12 days</WindowTitle>
        <WindowButton aria-label="Minimize"><Svg w={10} h={10}><path d="M0 5.500h10" /></Svg></WindowButton>
        <WindowButton aria-label="Restore"><Svg w={10} h={10}><path d="M.5 2.500h7v7h-7zM2.500 2.500v-2h7v7h-2" /></Svg></WindowButton>
        <WindowButton aria-label="Close"><Svg w={10} h={10}><path d="M0 0l10 10M10 0L0 10" /></Svg></WindowButton>
      </TitleBar>
      <MenuBar>{menus.map((m) => <button key={m}>{m}</button>)}</MenuBar>
      <AppToolBar />
      <Main>
        <DataSide />
        <CardColumn />
        <WorkArea />
      </Main>
      <BottomBars />
    </Window>
  );
}
